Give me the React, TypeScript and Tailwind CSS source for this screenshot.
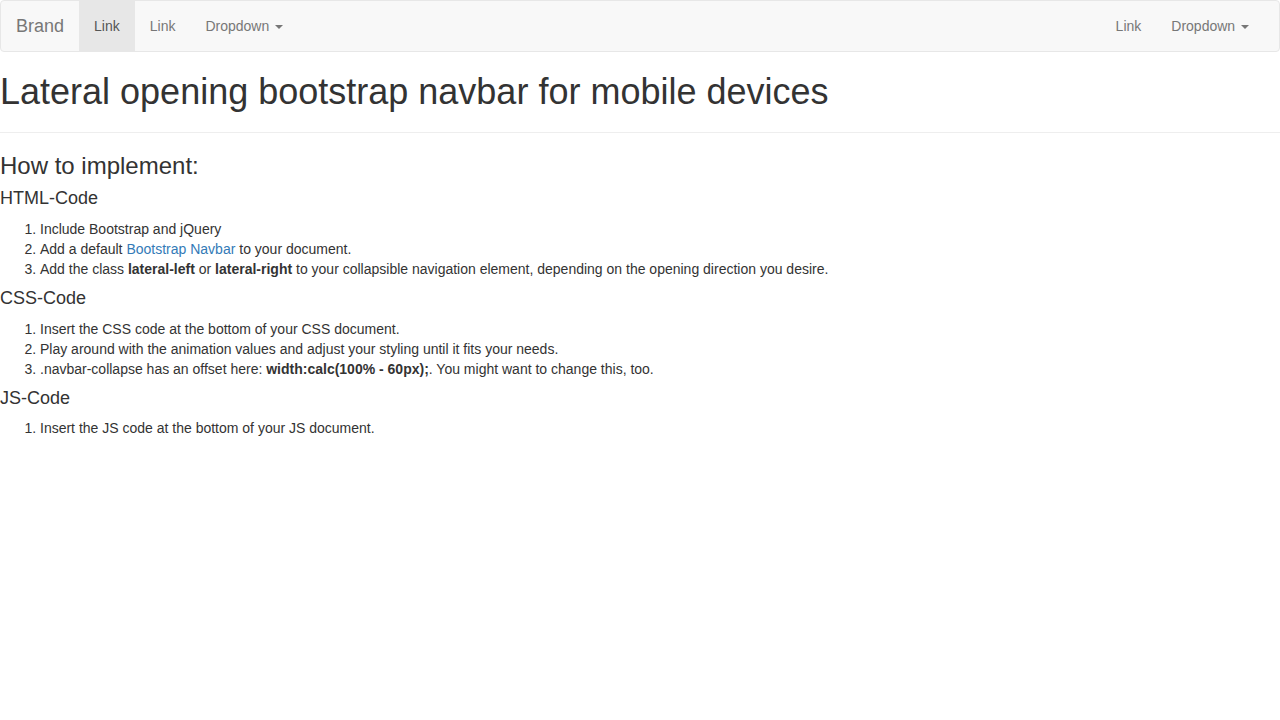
import React from 'react'

function Caret() {
  return (
    <span className="ml-0.5 inline-block h-0 w-0 align-middle border-t-4 border-x-4 border-x-transparent border-t-[#777]" />
  )
}

function NavLink({ children, active }: { children: React.ReactNode; active?: boolean }) {
  return (
    <a
      href="#"
      className={
        active
          ? 'block px-[15px] py-[15px] leading-5 text-[#555] bg-[#e7e7e7]'
          : 'block px-[15px] py-[15px] leading-5 text-[#777]'
      }
    >
      {children}
    </a>
  )
}

export default function App() {
  return (
    <div className="min-h-screen bg-white text-[14px] leading-[20px] text-[#333] font-['Liberation_Sans',Arial,sans-serif]">
      {/* Navbar */}
      <nav className="mb-5 flex min-h-[50px] items-stretch justify-between rounded border border-[#e7e7e7] bg-[#f8f8f8]">
        <div className="flex">
          <a href="#" className="block h-[50px] px-[15px] py-[15px] text-[18px] leading-5 text-[#777]">
            Brand
          </a>
          <NavLink active>Link</NavLink>
          <NavLink>Link</NavLink>
          <NavLink>
            Dropdown <Caret />
          </NavLink>
        </div>
        <div className="flex pr-[15px]">
          <NavLink>Link</NavLink>
          <NavLink>
            Dropdown <Caret />
          </NavLink>
        </div>
      </nav>

      {/* Header */}
      <div className="mb-5 border-b border-[#eee] pb-[10px]">
        <h1 className="mb-2.5 text-[36px] font-medium leading-[1.1]">
          Lateral opening bootstrap navbar for mobile devices
        </h1>
      </div>

      {/* Content */}
      <h3 className="mb-2.5 text-[24px] font-medium leading-[1.1]">How to implement:</h3>

      <h4 className="mt-2.5 mb-2.5 text-[18px] font-medium leading-[1.1]">HTML-Code</h4>
      <ol className="mb-2.5 list-decimal pl-10">
        <li>Include Bootstrap and jQuery</li>
        <li>
          Add a default{' '}
          <a href="#" className="text-[#337ab7]">
            Bootstrap Navbar
          </a>{' '}
          to your document.
        </li>
        <li>
          Add the class <b>lateral-left</b> or <b>lateral-right</b> to your collapsible navigation element,
          depending on the opening direction you desire.
        </li>
      </ol>

      <h4 className="mt-2.5 mb-2.5 text-[18px] font-medium leading-[1.1]">CSS-Code</h4>
      <ol className="mb-2.5 list-decimal pl-10">
        <li>Insert the CSS code at the bottom of your CSS document.</li>
        <li>Play around with the animation values and adjust your styling until it fits your needs.</li>
        <li>
          .navbar-collapse has an offset here: <b>width:calc(100% - 60px);</b>. You might want to change this, too.
        </li>
      </ol>

      <h4 className="mt-2.5 mb-2.5 text-[18px] font-medium leading-[1.1]">JS-Code</h4>
      <ol className="mb-2.5 list-decimal pl-10">
        <li>Insert the JS code at the bottom of your JS document.</li>
      </ol>
    </div>
  )
}
